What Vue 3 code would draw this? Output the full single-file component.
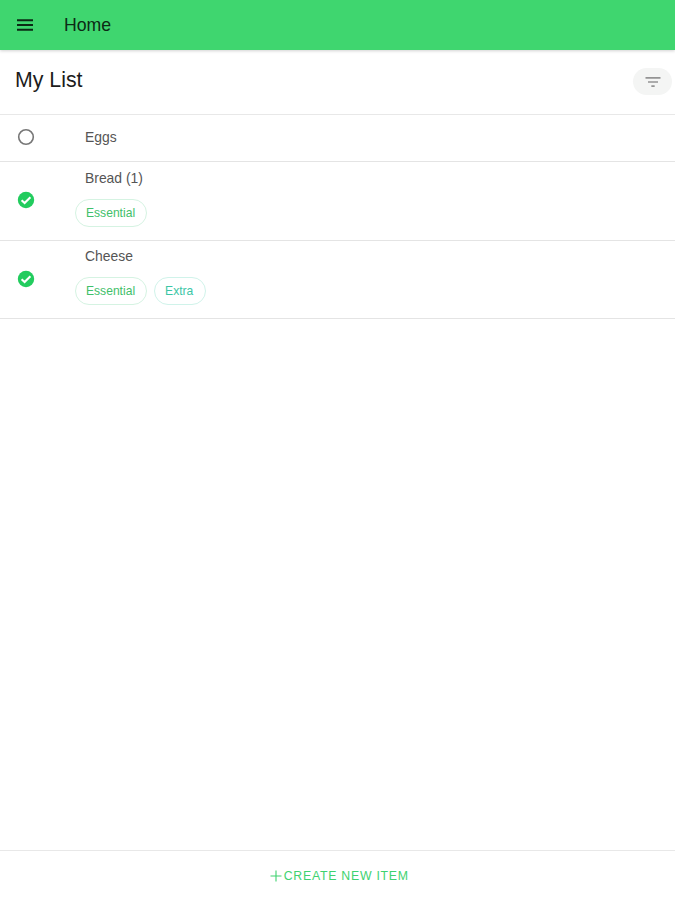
<script setup>
const items = [
  { name: 'Eggs', done: false, tags: [] },
  { name: 'Bread (1)', done: true, tags: [{ label: 'Essential', kind: 'essential' }] },
  { name: 'Cheese', done: true, tags: [{ label: 'Essential', kind: 'essential' }, { label: 'Extra', kind: 'extra' }] },
]
</script>

<template>
  <div class="page">
    <header class="appbar">
      <svg class="menu" width="24" height="24" viewBox="0 0 24 24"><path d="M4 17.8h16v-2H4v2zm0-4.8h16v-2H4v2zm0-6.8v2h16v-2H4z" fill="#0b2a14"/></svg>
      <span class="title">Home</span>
    </header>
    <section class="head">
      <h1>My List</h1>
      <button class="filter" aria-label="Filter">
        <svg width="24" height="24" viewBox="0 0 24 24"><path d="M10 18h4v-2h-4v2zM3 6v2h18V6H3zm3 7h12v-2H6v2z" fill="#949494"/></svg>
      </button>
    </section>
    <ul class="list">
      <li v-for="item in items" :key="item.name" class="row" :class="{ tall: item.tags.length }">
        <span class="check">
          <svg v-if="item.done" width="20" height="20" viewBox="0 0 20 20">
            <circle cx="10" cy="10" r="8.2" fill="#22cc5e"/>
            <path d="M5.6 10.2l3 2.9 5.8-5.8" fill="none" stroke="#fff" stroke-width="2.1"/>
          </svg>
          <svg v-else width="20" height="20" viewBox="0 0 20 20">
            <circle cx="10" cy="10" r="7.3" fill="none" stroke="#777" stroke-width="1.6"/>
          </svg>
        </span>
        <div class="body">
          <div class="name">{{ item.name }}</div>
          <div v-if="item.tags.length" class="tags">
            <span v-for="tag in item.tags" :key="tag.label" class="tag" :class="tag.kind">{{ tag.label }}</span>
          </div>
        </div>
      </li>
    </ul>
    <footer class="foot">
      <button class="create">
        <svg width="14" height="14" viewBox="0 0 14 14"><path d="M7 1.5v11M1.5 7h11" stroke="#3ed26f" stroke-width="1.1" fill="none"/></svg>
        <span>CREATE NEW ITEM</span>
      </button>
    </footer>
  </div>
</template>

<style>
html, body { margin: 0; padding: 0; background: #fff; }
</style>

<style scoped>
.page {
  width: 675px;
  height: 900px;
  display: flex;
  flex-direction: column;
  font-family: "Liberation Sans", Arial, sans-serif;
  background: #fff;
  overflow: hidden;
}
.appbar {
  height: 50px;
  flex: none;
  box-sizing: border-box;
  display: flex;
  align-items: center;
  padding-left: 13px;
  background: #3fd66f;
  box-shadow: 0 1px 3px rgba(0, 0, 0, 0.18);
  position: relative;
}
.title {
  margin-left: 27px;
  font-size: 17.7px;
  color: #0c2a15;
}
.head {
  height: 65px;
  flex: none;
  box-sizing: border-box;
  display: flex;
  align-items: center;
  justify-content: space-between;
  padding: 0 3px 1px 15px;
  border-bottom: 1px solid #e8e8e8;
}
h1 {
  margin: 0 0 2px;
  font-size: 21.3px;
  font-weight: 400;
  color: #1c1c1c;
}
.filter {
  width: 39px;
  height: 27px;
  padding: 0;
  border: none;
  border-radius: 14px;
  background: #f4f5f4;
  display: flex;
  align-items: center;
  justify-content: center;
}
.filter svg { width: 20px; height: 20px; }
.list { list-style: none; margin: 0; padding: 0; }
.row {
  display: flex;
  align-items: center;
  box-sizing: border-box;
  height: 47px;
  border-bottom: 1px solid #e4e4e4;
}
.row.tall { height: 79px; }
.row.tall:nth-child(3) { height: 78px; }
.check {
  width: 20px;
  height: 20px;
  margin: 0 0 2px 16px;
  display: block;
  flex: none;
}
.check svg { display: block; }
.body { margin-left: 39px; padding-bottom: 2px; }
.name {
  margin-left: 10px;
  font-size: 13.9px;
  line-height: 16px;
  color: #555;
}
.tags { display: flex; gap: 7px; margin-top: 13px; margin-bottom: 4px; }
.tag {
  height: 28px;
  box-sizing: border-box;
  padding: 0 11px 0 10px;
  display: flex;
  align-items: center;
  border-radius: 14px;
  font-size: 12.1px;
  background: #fff;
}
.tag.essential { color: #3fc06a; border: 1px solid #d5f3e2; }
.tag.extra { color: #3cc6a6; border: 1px solid #d0f3ea; padding-right: 12px; }
.foot {
  margin-top: auto;
  height: 50px;
  flex: none;
  box-sizing: border-box;
  border-top: 1px solid #e8e8e8;
  display: flex;
  align-items: center;
  justify-content: center;
}
.create {
  border: none;
  background: none;
  padding: 0 0 0 3px;
  display: flex;
  align-items: center;
  gap: 0.5px;
  font-family: inherit;
  font-size: 12.3px;
  letter-spacing: 0.75px;
  color: #3ed26f;
}
</style>
